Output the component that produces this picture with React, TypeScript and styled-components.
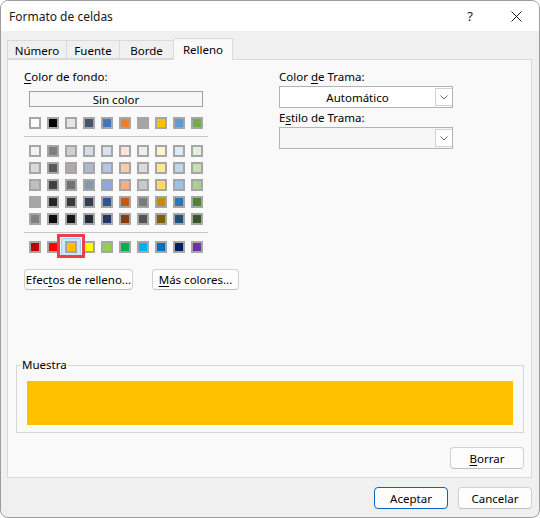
import styled, { createGlobalStyle } from 'styled-components';

const GlobalStyle = createGlobalStyle`
  html, body {
    margin: 0;
    padding: 0;
    background: #ffffff;
  }
  body {
    font-family: 'Segoe UI', 'Noto Sans', sans-serif;
    font-size: 11.5px;
    color: #1a1a1a;
  }
  * {
    box-sizing: border-box;
  }
`;

const Window = styled.div`
  width: 540px;
  height: 518px;
  display: flex;
  flex-direction: column;
  background: #f0f0f0;
  border: 1px solid #9c9c9c;
  border-radius: 8px;
  overflow: hidden;
`;

const TitleBar = styled.div`
  height: 30px;
  display: flex;
  align-items: center;
  background: #ffffff;
  padding-left: 8px;
`;

const Title = styled.span`
  flex: 1;
  font-size: 12px;
  color: #1a1a1a;
`;

const TitleButton = styled.span`
  width: 46px;
  height: 30px;
  display: flex;
  align-items: center;
  justify-content: center;
  font-size: 13px;
  color: #1a1a1a;
`;

const Body = styled.div`
  padding: 7px 7px 0 6px;
`;

const TabRow = styled.div`
  display: flex;
  align-items: flex-end;
  height: 21px;
  position: relative;
  z-index: 1;
`;

const Tab = styled.div<{ $w: number; $active?: boolean }>`
  width: ${({ $w }) => $w}px;
  height: ${({ $active }) => ($active ? 22 : 19)}px;
  margin-left: -1px;
  margin-bottom: ${({ $active }) => ($active ? -1 : 0)}px;
  display: flex;
  align-items: center;
  justify-content: center;
  padding-top: ${({ $active }) => ($active ? 0 : 1)}px;
  border: 1px solid #d9d9d9;
  border-bottom: ${({ $active }) => ($active ? 'none' : '1px solid #d9d9d9')};
  background: ${({ $active }) => ($active ? '#f9f9f9' : '#f0f0f0')};
  color: #000;
  &:first-child {
    margin-left: 0;
  }
`;

const Panel = styled.div`
  height: 419px;
  display: flex;
  flex-direction: column;
  border: 1px solid #d9d9d9;
  background: #f9f9f9;
`;

const TopSection = styled.div`
  display: flex;
  padding: 9px 0 0 16px;
`;

const LeftCol = styled.div`
  width: 255px;
  display: flex;
  flex-direction: column;
`;

const RightCol = styled.div`
  width: 174px;
  display: flex;
  flex-direction: column;
`;

const Label = styled.div<{ $top?: number }>`
  height: 16px;
  line-height: 16px;
  margin-top: ${({ $top }) => $top ?? 0}px;
  color: #000;
  white-space: nowrap;
`;

const Key = styled.span`
  text-decoration: underline;
  text-underline-offset: 2px;
`;

const SinColor = styled.div`
  width: 174px;
  height: 16px;
  margin: 6px 0 0 5px;
  display: flex;
  align-items: center;
  justify-content: center;
  border: 1px solid #a0a0a0;
  background: #f7f7f7;
  color: #000;
`;

const SwatchRow = styled.div<{ $top: number }>`
  display: flex;
  gap: 6px;
  margin: ${({ $top }) => $top}px 0 0 5px;
`;

const SwatchGrid = styled.div`
  display: grid;
  grid-template-columns: repeat(10, 12px);
  column-gap: 6px;
  row-gap: 5px;
  margin: 8px 0 0 5px;
`;

const SwatchCell = styled.div`
  position: relative;
  width: 12px;
  height: 12px;
`;

const Swatch = styled.span<{ $color: string }>`
  position: relative;
  z-index: 2;
  display: block;
  width: 12px;
  height: 12px;
  border: 2px solid #a6a6a6;
  background: ${({ $color }) => $color};
`;

const Highlight = styled.span`
  position: absolute;
  left: -4px;
  top: -3px;
  width: 20px;
  height: 18px;
  border: 1px solid #99d1ff;
  border-radius: 2px;
  background: #cce8ff;
`;

const RedMark = styled.span`
  position: absolute;
  left: -8px;
  top: -7px;
  width: 28px;
  height: 24px;
  border: 3px solid #ee3f47;
  z-index: 3;
`;

const Separator = styled.div`
  width: 184px;
  height: 1px;
  margin-top: 7px;
  background: #c6c6c6;
`;

const ButtonRow = styled.div`
  display: flex;
  gap: 19px;
  margin-top: 16px;
`;

const Button = styled.div<{ $w: number; $h?: number; $default?: boolean }>`
  width: ${({ $w }) => $w}px;
  height: ${({ $h }) => $h ?? 22}px;
  display: flex;
  align-items: center;
  justify-content: center;
  border: 1px solid ${({ $default }) => ($default ? '#0067c0' : '#d1d1d1')};
  border-bottom-color: ${({ $default }) => ($default ? '#0067c0' : '#bdbdbd')};
  border-radius: 4px;
  background: #fdfdfd;
  color: #000;
  white-space: nowrap;
`;

const Dropdown = styled.div<{ $disabled?: boolean; $top: number }>`
  height: 22px;
  margin-top: ${({ $top }) => $top}px;
  display: flex;
  border: 1px solid #b3b3b3;
  background: ${({ $disabled }) => ($disabled ? '#f6f6f6' : '#ffffff')};
  color: #000;
`;

const DropdownValue = styled.div`
  flex: 1;
  display: flex;
  align-items: center;
  justify-content: center;
`;

const DropdownArrow = styled.div`
  width: 17px;
  margin: 1px 0;
  display: flex;
  align-items: center;
  justify-content: center;
  border: 1px solid #d2d2d2;
  border-right: none;
  background: #ffffff;
`;

const Muestra = styled.fieldset`
  margin: auto 7px 0 8px;
  padding: 8px 10px 7px 10px;
  border: 1px solid #d6d6d6;
  min-width: 0;
`;

const MuestraLegend = styled.legend`
  margin-left: -6px;
  padding: 0 1px;
  height: 16px;
  line-height: 16px;
  color: #000;
`;

const Sample = styled.div<{ $color: string }>`
  height: 44px;
  background: ${({ $color }) => $color};
`;

const BorrarRow = styled.div`
  display: flex;
  justify-content: flex-end;
  padding: 14px 7px 8px 0;
`;

const Footer = styled.div`
  display: flex;
  justify-content: flex-end;
  gap: 10px;
  padding: 9px 7px 0 0;
`;

const themeRow = ['#FFFFFF', '#000000', '#E7E6E6', '#44546A', '#4472C4', '#ED7D31', '#A5A5A5', '#FFC000', '#5B9BD5', '#70AD47'];

const tints = [
  ['#F2F2F2', '#7F7F7F', '#D0CECE', '#D6DCE4', '#D9E1F2', '#FCE4D6', '#EDEDED', '#FFF2CC', '#DDEBF7', '#E2EFDA'],
  ['#D9D9D9', '#595959', '#AEAAAA', '#ACB9CA', '#B4C6E7', '#F8CBAD', '#DBDBDB', '#FFE699', '#BDD7EE', '#C6E0B4'],
  ['#BFBFBF', '#404040', '#757171', '#8497B0', '#8EA9DB', '#F4B084', '#C9C9C9', '#FFD966', '#9BC2E6', '#A9D08E'],
  ['#A6A6A6', '#262626', '#3A3838', '#333F4F', '#305496', '#C65911', '#7B7B7B', '#BF8F00', '#2F75B5', '#548235'],
  ['#808080', '#0D0D0D', '#161616', '#222B35', '#203764', '#833C0C', '#525252', '#806000', '#1F4E78', '#375623'],
];

const standard = ['#C00000', '#FF0000', '#FFC000', '#FFFF00', '#92D050', '#00B050', '#00B0F0', '#0070C0', '#002060', '#7030A0'];

const selected = 2;

const tabs = [
  { text: 'Número', w: 60 },
  { text: 'Fuente', w: 54 },
  { text: 'Borde', w: 55 },
  { text: 'Relleno', w: 60, active: true },
];

const Chevron = () => (
  <svg width="8" height="5" viewBox="0 0 8 5">
    <path d="M0.5 0.5 L4 4 L7.5 0.5" fill="none" stroke="#6b6b6b" strokeWidth="1" />
  </svg>
);

const CloseIcon = () => (
  <svg width="11" height="11" viewBox="0 0 11 11">
    <path d="M0.5 0.5 L10.5 10.5 M10.5 0.5 L0.5 10.5" fill="none" stroke="#1a1a1a" strokeWidth="1" />
  </svg>
);

const App = () => {
  return (
    <>
      <GlobalStyle />
      <Window>
        <TitleBar>
          <Title>Formato de celdas</Title>
          <TitleButton>?</TitleButton>
          <TitleButton>
            <CloseIcon />
          </TitleButton>
        </TitleBar>
        <Body>
          <TabRow>
            {tabs.map((tab) => (
              <Tab key={tab.text} $w={tab.w} $active={tab.active}>
                {tab.text}
              </Tab>
            ))}
          </TabRow>
          <Panel>
            <TopSection>
              <LeftCol>
                <Label>
                  <Key>C</Key>olor de fondo:
                </Label>
                <SinColor>Sin color</SinColor>
                <SwatchRow $top={10}>
                  {themeRow.map((c) => (
                    <SwatchCell key={c}>
                      <Swatch $color={c} />
                    </SwatchCell>
                  ))}
                </SwatchRow>
                <Separator />
                <SwatchGrid>
                  {tints.flat().map((c, i) => (
                    <SwatchCell key={i}>
                      <Swatch $color={c} />
                    </SwatchCell>
                  ))}
                </SwatchGrid>
                <Separator />
                <SwatchRow $top={8}>
                  {standard.map((c, i) => (
                    <SwatchCell key={i}>
                      {i === selected && <Highlight />}
                      <Swatch $color={c} />
                      {i === selected && <RedMark />}
                    </SwatchCell>
                  ))}
                </SwatchRow>
                <ButtonRow>
                  <Button $w={109} $h={21}>
                    Efec<Key>t</Key>os de relleno...
                  </Button>
                  <Button $w={87} $h={21}>
                    <Key>M</Key>ás colores...
                  </Button>
                </ButtonRow>
              </LeftCol>
              <RightCol>
                <Label>
                  Color <Key>d</Key>e Trama:
                </Label>
                <Dropdown $top={1}>
                  <DropdownValue>Automático</DropdownValue>
                  <DropdownArrow>
                    <Chevron />
                  </DropdownArrow>
                </Dropdown>
                <Label $top={2}>
                  E<Key>s</Key>tilo de Trama:
                </Label>
                <Dropdown $top={1} $disabled>
                  <DropdownValue />
                  <DropdownArrow>
                    <Chevron />
                  </DropdownArrow>
                </Dropdown>
              </RightCol>
            </TopSection>
            <Muestra>
              <MuestraLegend>Muestra</MuestraLegend>
              <Sample $color={standard[selected]} />
            </Muestra>
            <BorrarRow>
              <Button $w={74}>
                <Key>B</Key>orrar
              </Button>
            </BorrarRow>
          </Panel>
        </Body>
        <Footer>
          <Button $w={74} $default>
            Aceptar
          </Button>
          <Button $w={74}>Cancelar</Button>
        </Footer>
      </Window>
    </>
  );
};

export default App;
